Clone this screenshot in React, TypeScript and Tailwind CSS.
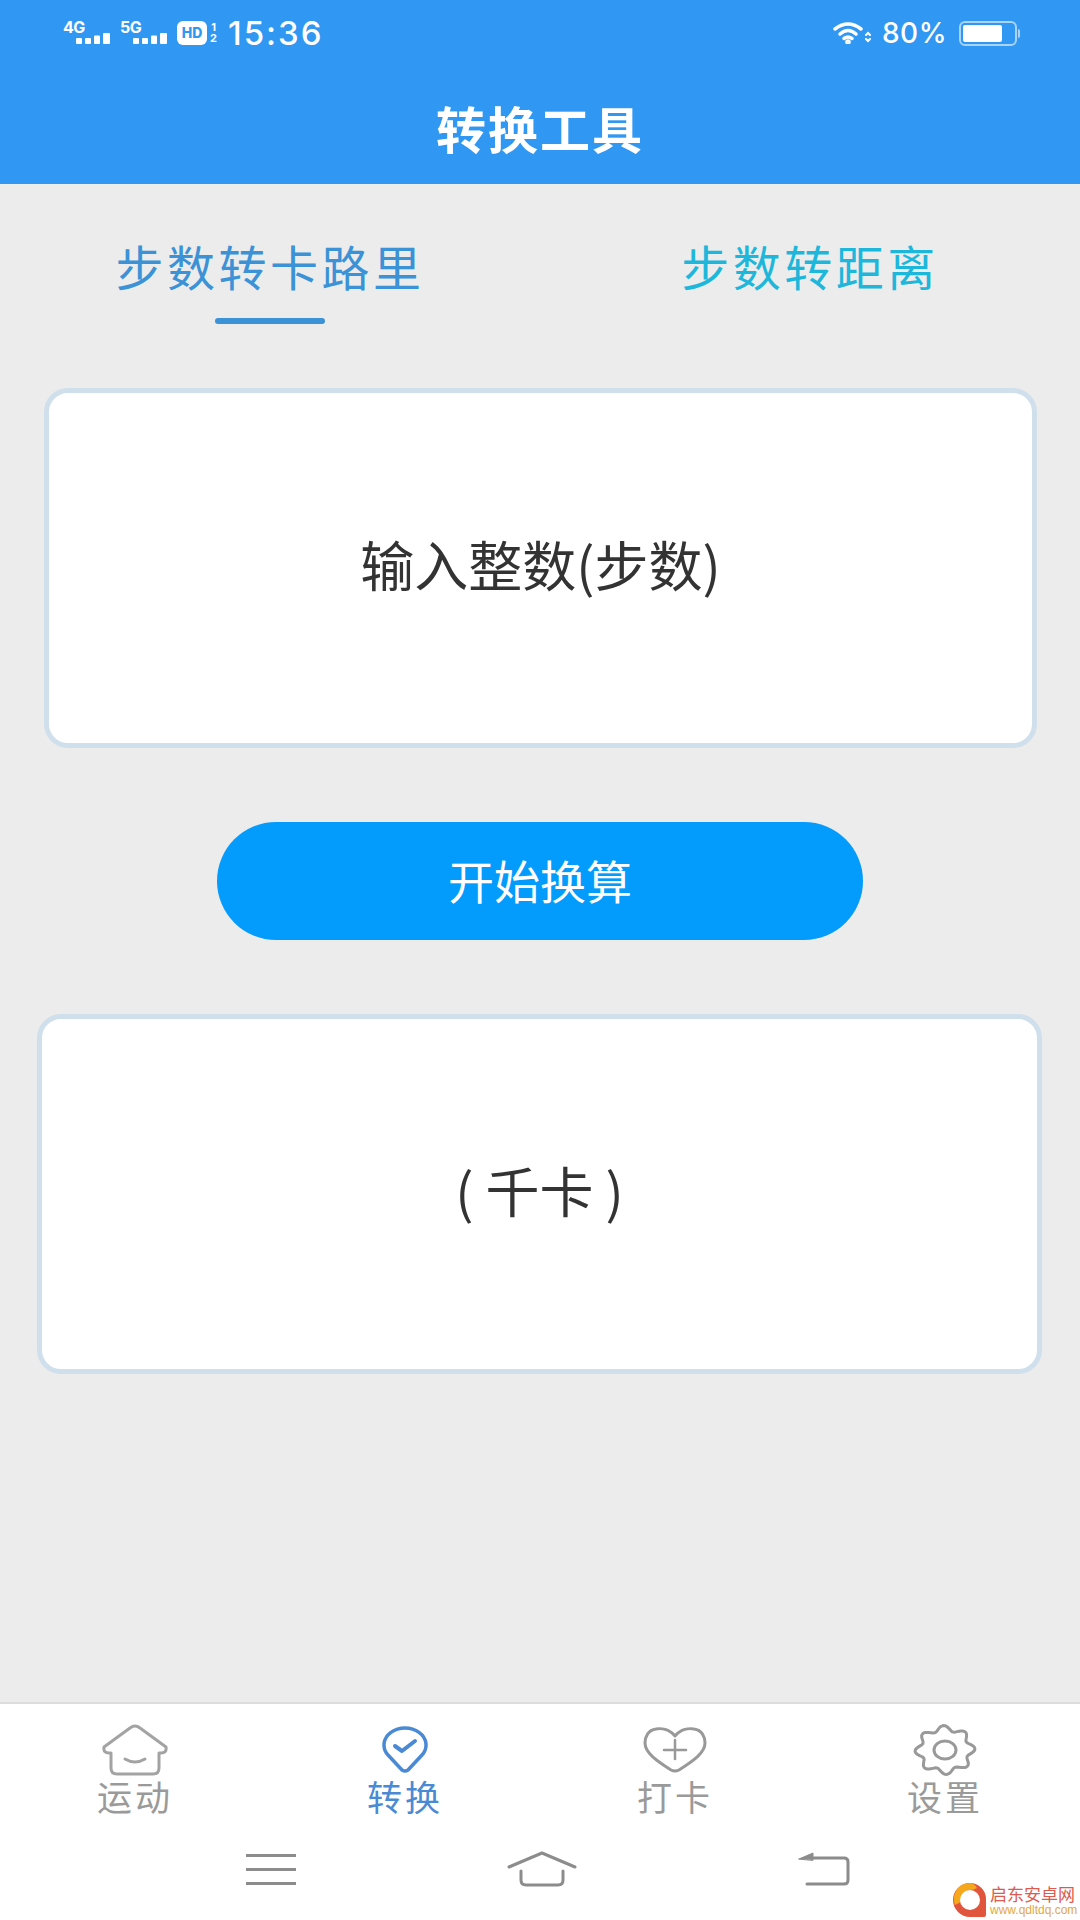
import React from "react";

const CJK = "font-['Noto_Sans_CJK_SC','Noto_Sans',sans-serif]";

const SignalBadge = ({ label }: { label: string }) => (
  <div className="flex flex-col w-[47px]">
    <span className="h-[11px] text-[16px] leading-[11px] font-bold text-white font-['Inter',sans-serif] tracking-[-0.5px]">
      {label}
    </span>
    <svg width="47" height="11" viewBox="0 0 47 11" fill="#fff">
      <rect x="13" y="5" width="6" height="6" rx="1" />
      <rect x="22" y="5" width="6" height="6" rx="1" />
      <rect x="31" y="2.5" width="6" height="8.5" rx="1" />
      <rect x="40" y="0" width="7" height="11" rx="1" />
    </svg>
  </div>
);

const StatusBar = () => (
  <div className="h-[66px] flex items-center justify-between pl-[63px] pr-[60px] text-white">
    <div className="flex items-center">
      <SignalBadge label="4G" />
      <div className="w-[10px]" />
      <SignalBadge label="5G" />
      <div className="ml-[10px] w-[30px] h-[24px] rounded-[6px] bg-white flex items-center justify-center text-[14px] leading-none font-extrabold text-[#3097f2] font-['Inter',sans-serif]">
        HD
      </div>
      <div className="ml-[2px] w-[9px] flex flex-col items-center text-[11px] leading-[11px] font-bold font-['Inter',sans-serif]">
        <span>1</span>
        <span>2</span>
      </div>
      <span className="ml-[10px] text-[33px] leading-none font-medium font-['Inter',sans-serif] tracking-[2px]">
        15:36
      </span>
    </div>
    <div className="flex items-center">
      <svg width="38" height="22" viewBox="0 0 38 22" fill="none" stroke="#fff" strokeWidth="3.5" strokeLinecap="round">
        <path d="M2 7 Q15 -3 28 7" />
        <path d="M7 12 Q15 5 23 12" />
        <path d="M11 16.5 Q15 13.5 19 16.5" />
        <circle cx="15" cy="20" r="1" fill="#fff" />
        <path d="M33 13l2-2 2 2M33 17l2 2 2-2" strokeWidth="2" />
      </svg>
      <span className="ml-[11px] text-[28px] leading-none font-medium font-['Inter',sans-serif] tracking-[0.5px]">
        80%
      </span>
      <div className="ml-[12px] w-[58px] h-[25px] rounded-[6px] border-2 border-[#a9d3f8] p-[2px] flex">
        <div className="w-[39px] h-full bg-white rounded-[2px]" />
      </div>
      <div className="ml-[1px] w-[2px] h-[9px] bg-[#a9d3f8] rounded-r" />
    </div>
  </div>
);

const HouseIcon = () => (
  <svg width="66" height="52" viewBox="0 0 66 52" fill="none" stroke="#a3a3a3" strokeWidth="3" strokeLinecap="round" strokeLinejoin="round">
    <path d="M9 29 H7 Q1 29 2 23 L28 4 Q33 0 38 4 L64 23 Q65 29 59 29 H57 V44 Q57 50 51 50 H15 Q9 50 9 44 Z" />
    <path d="M23 35 Q33 41 43 35" />
  </svg>
);

const CheckPinIcon = () => (
  <svg width="46" height="48" viewBox="0 0 46 48" fill="none" stroke="#4a8ad4" strokeWidth="3.5" strokeLinecap="round" strokeLinejoin="round">
    <path d="M20 44 L6 29 A21 17 0 1 1 40 29 L26 44 Q23 46 20 44 Z" />
    <path d="M13 20 L20 25 L33 15" strokeWidth="4" />
  </svg>
);

const HeartIcon = () => (
  <svg width="64" height="46" viewBox="0 0 64 46" fill="none" stroke="#999" strokeWidth="3" strokeLinecap="round" strokeLinejoin="round">
    <path d="M32 9 C26 2 18 1 13 2 C5 3 2 10 2 16 C2 26 14 34 28 43 Q32 45 36 43 C50 34 62 26 62 16 C62 10 59 3 51 2 C46 1 38 2 32 9 Z" />
    <path d="M21 23 H43 M32 13 V32" strokeWidth="2.5" />
  </svg>
);

const gearPoints = Array.from({ length: 96 }, (_, i) => {
  const a = (i / 96) * Math.PI * 2;
  const r = 0.89 + 0.11 * Math.cos(8 * a + Math.PI / 8);
  return `${(32 + 30 * r * Math.cos(a)).toFixed(1)},${(26 + 24.5 * r * Math.sin(a)).toFixed(1)}`;
}).join(" ");

const GearIcon = () => (
  <svg width="64" height="52" viewBox="0 0 64 52" fill="none" stroke="#999" strokeWidth="3" strokeLinejoin="round">
    <polygon points={gearPoints} />
    <ellipse cx="32" cy="26" rx="11" ry="9" />
  </svg>
);

const NAV_ITEMS = [
  { label: "运动", icon: <HouseIcon />, active: false },
  { label: "转换", icon: <CheckPinIcon />, active: true },
  { label: "打卡", icon: <HeartIcon />, active: false },
  { label: "设置", icon: <GearIcon />, active: false },
];

const BottomNav = () => (
  <div className="relative h-[218px] bg-white border-t-2 border-[#dcdcdc]">
    <div className="grid grid-cols-4 pt-[20px]">
      {NAV_ITEMS.map((item) => (
        <div key={item.label} className="flex flex-col items-center">
          <div className="h-[52px] flex items-center justify-center">{item.icon}</div>
          <span
            className={`-mt-[2px] text-[35px] leading-[44px] tracking-[3px] ${
              item.active ? "text-[#4a8ad4]" : "text-[#9a9a9a]"
            }`}
          >
            {item.label}
          </span>
        </div>
      ))}
    </div>
    <div className="flex items-center pl-[246px] mt-[33px] h-[36px]">
      <div className="w-[50px] flex flex-col gap-[11px]">
        <div className="h-[3px] bg-[#8c8c8c]" />
        <div className="h-[3px] bg-[#8c8c8c]" />
        <div className="h-[3px] bg-[#8c8c8c]" />
      </div>
      <svg className="ml-[211px]" width="70" height="36" viewBox="0 0 70 36" fill="none" stroke="#8c8c8c" strokeWidth="3" strokeLinecap="round" strokeLinejoin="round">
        <path d="M2 16 L35 2 L68 16" />
        <path d="M14 20 V29 Q14 34 19 34 H51 Q56 34 56 29 V20" />
      </svg>
      <svg className="ml-[221px]" width="52" height="34" viewBox="0 0 52 34" fill="none" stroke="#8c8c8c" strokeWidth="3" strokeLinecap="round" strokeLinejoin="round">
        <path d="M9 32 H46 Q50 32 50 28 V10 Q50 6 46 6 H14" />
        <path d="M1 7 L15 1 V8 Z" fill="#8c8c8c" strokeWidth="1" />
      </svg>
    </div>
    {/* site watermark */}
    <div className="absolute left-[953px] top-[178px] flex items-center">
      <svg width="34" height="36" viewBox="0 0 34 36">
        <path d="M17 1 A16 16 0 0 1 33 17 V33 Q33 35 31 35 H17 A16 16 0 0 1 17 1 Z" fill="#e2553d" />
        <path d="M17 1 A16 16 0 0 0 2 23 L10 19 A8 8 0 0 1 17 8 Q21 8 24 6 Q21 1 17 1 Z" fill="#f5a81c" />
        <circle cx="17" cy="18" r="10" fill="#fff" />
      </svg>
      <div className="ml-[3px] flex flex-col">
        <span className="h-[20px] text-[17px] leading-[20px] text-[#dd5a4e]">启东安卓网</span>
        <span className="h-[12px] text-[12px] leading-[12px] text-[#e5a83a] font-['Liberation_Sans',sans-serif]">
          www.qdltdq.com
        </span>
      </div>
    </div>
  </div>
);

const ValueCard = ({ text, className }: { text: string; className: string }) => (
  <div
    className={`h-[360px] pb-[8px] bg-white border-[5px] border-[#cfdfec] rounded-[24px] flex items-center justify-center text-[54px] leading-none text-[#333] ${className}`}
  >
    {text}
  </div>
);

export default function App() {
  return (
    <div className={`w-[1080px] h-[1920px] flex flex-col bg-[#ececec] overflow-hidden ${CJK}`}>
      <div className="h-[184px] bg-[#3097f2]">
        <StatusBar />
        <div className="h-[118px] pt-[4px] flex items-center justify-center text-[50px] leading-none font-bold text-white tracking-[2px]">
          转换工具
        </div>
      </div>

      <main className="flex-1 flex flex-col">
        <div className="grid grid-cols-2 pt-[51px]">
          <div className="flex flex-col items-center">
            <span className="text-[48px] leading-[60px] tracking-[3.5px] text-[#3b92d6]">步数转卡路里</span>
            <div className="mt-[23px] w-[110px] h-[6px] rounded-full bg-[#3b92d6]" />
          </div>
          <div className="flex flex-col items-center">
            <span className="text-[48px] leading-[60px] tracking-[3.5px] text-[#1db7dc]">步数转距离</span>
          </div>
        </div>

        <ValueCard text="输入整数(步数)" className="mt-[64px] ml-[44px] w-[993px]" />

        <button className="mt-[74px] mx-auto w-[646px] h-[118px] pb-[4px] rounded-full bg-[#039cfd] text-white text-[46px] leading-none">
          开始换算
        </button>

        <ValueCard text="( 千卡 )" className="mt-[74px] ml-[37px] w-[1005px]" />
      </main>

      <BottomNav />
    </div>
  );
}
